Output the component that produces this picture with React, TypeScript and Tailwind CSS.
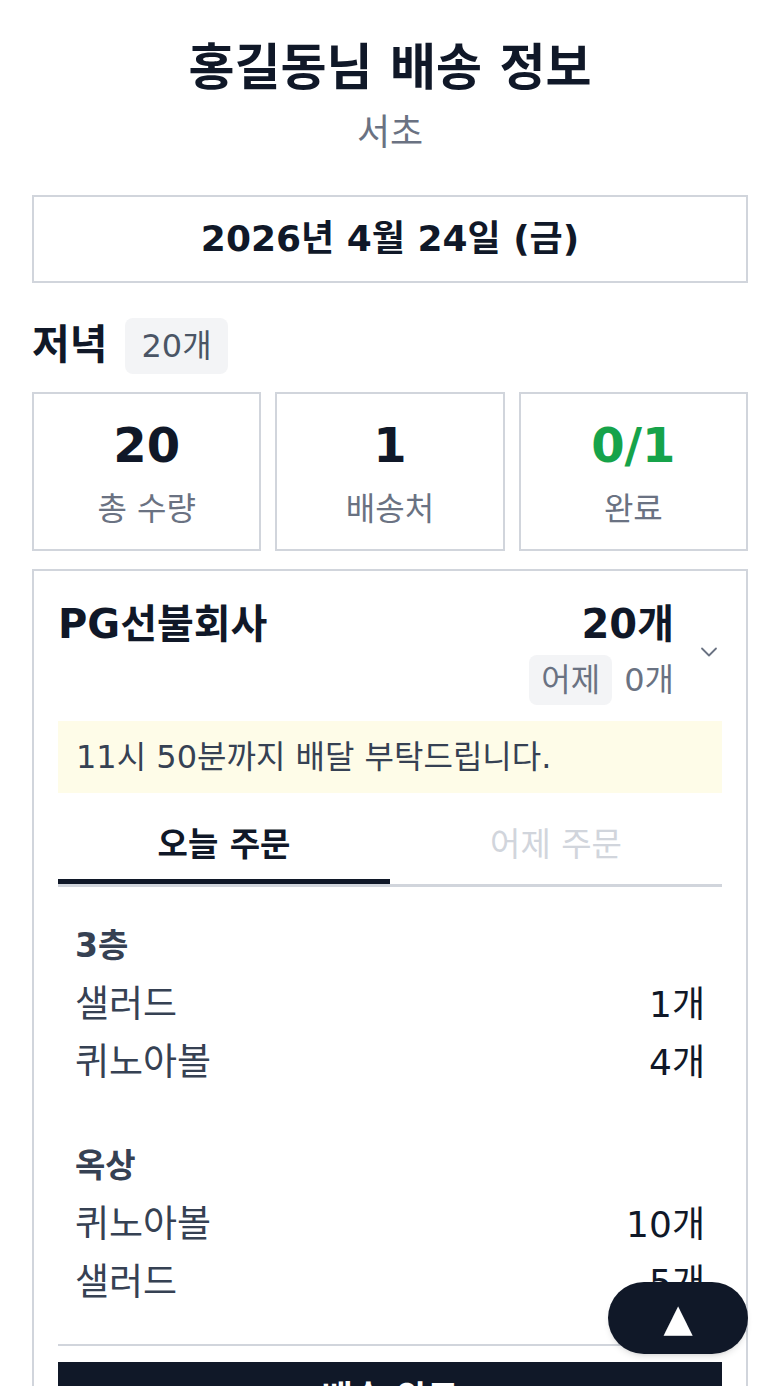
import React, { useState } from "react";

const FONT = "font-['DejaVu_Sans','Noto_Sans_CJK_KR',sans-serif]";

type Item = { name: string; qty: number };
type Group = { floor: string; items: Item[] };

const todayGroups: Group[] = [
  {
    floor: "3층",
    items: [
      { name: "샐러드", qty: 1 },
      { name: "퀴노아볼", qty: 4 },
    ],
  },
  {
    floor: "옥상",
    items: [
      { name: "퀴노아볼", qty: 10 },
      { name: "샐러드", qty: 5 },
    ],
  },
];

function StatCard({ value, label, green }: { value: string; label: string; green?: boolean }) {
  return (
    <div className="flex-1 h-[159px] border-2 border-gray-300 flex flex-col items-center">
      <div
        className={
          "mt-[21px] text-[48px] leading-[60px] font-bold " +
          (green ? "text-[#16a34a]" : "text-gray-900")
        }
      >
        {value}
      </div>
      <div className="mt-[10px] text-[32px] leading-[48px] text-gray-500">{label}</div>
    </div>
  );
}

function Chevron() {
  return (
    <svg width="20" height="12" viewBox="0 0 20 12" fill="none" className="text-gray-500">
      <path d="M3 2.5l7 7 7-7" stroke="currentColor" strokeWidth="1.8" strokeLinecap="round" strokeLinejoin="round" />
    </svg>
  );
}

export default function App() {
  const [tab, setTab] = useState<"today" | "yesterday">("today");

  return (
    <div className={FONT + " min-h-screen bg-white px-[32px] pt-[36px] pb-[40px]"}>
      <h1 className="text-center text-[50px] leading-[64px] font-bold text-gray-900">
        홍길동님 배송 정보
      </h1>
      <p className="mt-[6px] text-center text-[36px] leading-[54px] text-gray-500">서초</p>

      <div className="mt-[35px] h-[88px] border-2 border-gray-300 flex items-center justify-center">
        <span className="text-[36px] font-bold text-gray-900">2026년 4월 24일 (금)</span>
      </div>

      <div className="mt-[35px] h-[56px] flex items-center gap-[18px]">
        <span className="text-[41px] font-bold text-gray-900">저녁</span>
        <span className="h-[56px] px-[16px] flex items-center rounded-[8px] bg-gray-100 text-[32px] text-gray-600">
          20개
        </span>
      </div>

      <div className="mt-[18px] flex gap-[14px]">
        <StatCard value="20" label="총 수량" />
        <StatCard value="1" label="배송처" />
        <StatCard value="0/1" label="완료" green />
      </div>

      <div className="mt-[18px] border-2 border-gray-300 px-[24px] pt-[28px]">
        <div className="flex items-start justify-between">
          <div className="text-[40px] leading-[50px] font-bold text-gray-900">PG선불회사</div>
          <div className="flex items-center gap-[22px]">
            <div className="flex flex-col items-end">
              <div className="text-[40px] leading-[50px] font-bold text-gray-900">20개</div>
              <div className="mt-[6px] flex items-center gap-[12px]">
                <span className="h-[50px] px-[12px] flex items-center rounded-[8px] bg-gray-100 text-[32px] text-gray-500">
                  어제
                </span>
                <span className="text-[32px] text-gray-500">0개</span>
              </div>
            </div>
            <div className="w-[26px] flex justify-center">
              <Chevron />
            </div>
          </div>
        </div>

        <div className="mt-[16px] h-[72px] bg-[#fefce8] px-[18px] flex items-center">
          <span className="text-[32px] text-gray-700">11시 50분까지 배달 부탁드립니다.</span>
        </div>

        <div className="mt-[18px] flex border-b-[3px] border-gray-300">
          <button
            type="button"
            onClick={() => setTab("today")}
            className={
              "flex-1 h-[73px] border-b-[5px] text-[33px] font-bold " +
              (tab === "today" ? "border-gray-900 text-gray-900" : "border-transparent text-gray-300")
            }
          >
            오늘 주문
          </button>
          <button
            type="button"
            onClick={() => setTab("yesterday")}
            className={
              "flex-1 h-[73px] border-b-[5px] text-[33px] " +
              (tab === "yesterday" ? "border-gray-900 text-gray-900 font-bold" : "border-transparent text-gray-300")
            }
          >
            어제 주문
          </button>
        </div>

        <div className="px-[17px] pt-[36px] pb-[32px] flex flex-col gap-[51px] border-b-2 border-gray-300">
          {todayGroups.map((g) => (
            <div key={g.floor}>
              <div className="text-[33px] leading-[45px] font-bold text-gray-700">{g.floor}</div>
              <div className="mt-[8px]">
                {g.items.map((it, i) => (
                  <div key={i} className="h-[58px] flex items-center justify-between">
                    <span className="text-[37px] text-gray-700">{it.name}</span>
                    <span className="text-[36px] text-gray-900">{it.qty}개</span>
                  </div>
                ))}
              </div>
            </div>
          ))}
        </div>

        <button
          type="button"
          className="mt-[16px] mb-[24px] w-full h-[72px] bg-gray-900 text-white text-[34px] font-bold"
        >
          배송 완료
        </button>
      </div>

      <button
        type="button"
        className="fixed right-[32px] bottom-[32px] w-[140px] h-[72px] rounded-[36px] bg-gray-900 text-white text-[38px] leading-none flex items-center justify-center shadow-md"
      >
        ▲
      </button>
    </div>
  );
}
